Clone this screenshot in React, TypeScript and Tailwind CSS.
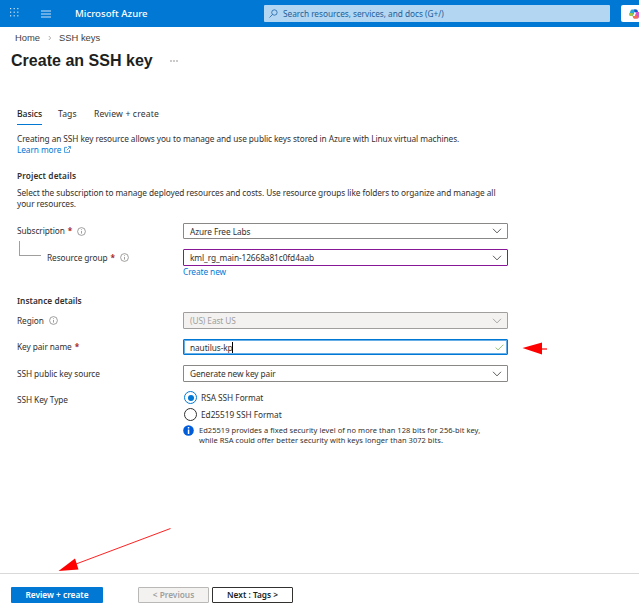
import type { ReactNode } from 'react';

function InfoIcon() {
  return (
    <svg width="9" height="9" viewBox="0 0 9 9" fill="none" stroke="#797775" strokeWidth="0.7">
      <circle cx="4.5" cy="4.5" r="3.9" />
      <path d="M4.5 4v2.6M4.5 2.3v.8" />
    </svg>
  );
}

function ChevronIcon({ color = '#605e5c' }: { color?: string }) {
  return (
    <svg width="10" height="6" viewBox="0 0 10 6" fill="none" stroke={color} strokeWidth="1">
      <path d="M1 .8 5 4.9 9 .8" />
    </svg>
  );
}

function Required() {
  return <span className="ml-[3px] font-bold text-[#a4262c]">*</span>;
}

interface FieldRowProps {
  label: string;
  required?: boolean;
  info?: boolean;
  nested?: boolean;
  className: string;
  children: ReactNode;
}

function FieldRow({ label, required, info, nested, className, children }: FieldRowProps) {
  return (
    <div className={`flex ${className}`}>
      <div className={`flex h-full w-[166px] shrink-0 items-center pb-px ${nested ? 'pl-[30px]' : ''}`}>
        <span>{label}</span>
        {required && <Required />}
        {info && (
          <span className="mt-px ml-[5px]">
            <InfoIcon />
          </span>
        )}
      </div>
      {children}
    </div>
  );
}

const box = 'flex h-full w-[325px] items-center justify-between rounded-[1px] border pl-[6px] pr-[5px]';

export default function App() {
  return (
    <div className="relative flex h-[611px] w-[639px] flex-col overflow-hidden bg-white font-['Noto_Sans',sans-serif] text-[8.3px] leading-[11px] tracking-[-0.08px] whitespace-nowrap text-[#323130]">
      {/* Top bar */}
      <header className="flex h-[27px] shrink-0 items-center bg-[#0078d4] text-white">
        <svg className="mb-[2px] ml-[10px] shrink-0" width="9" height="9" viewBox="0 0 9 9" fill="#d5e9f8">
          {[0, 3.6, 7.2].map((y) =>
            [0, 3.6, 7.2].map((x) => <rect key={`${x}-${y}`} x={x} y={y} width="1.2" height="1.2" />),
          )}
        </svg>
        <svg className="ml-[22px] shrink-0" width="10" height="8" viewBox="0 0 10 8" fill="#cce4f6">
          <path d="M0 .5h10v1H0zM0 3.5h10v1H0zM0 6.5h10v1H0z" />
        </svg>
        <span className="ml-[24px] w-[189px] shrink-0 text-[9.6px] font-medium tracking-[0.03px]">Microsoft Azure</span>
        <div className="flex h-[17px] w-[346px] shrink-0 items-center rounded-[1px] bg-[#b3d6f2] pl-[5px] text-[#1f5f99]">
          <svg width="9" height="9" viewBox="0 0 9 9" fill="none" stroke="#1f66a8" strokeWidth="0.8">
            <circle cx="5.4" cy="3.5" r="2.7" />
            <path d="M3.5 5.5.5 8.5" />
          </svg>
          <span className="ml-[5px] tracking-[-0.04px]">Search resources, services, and docs (G+/)</span>
        </div>
        <div className="ml-[11px] flex h-[17px] w-[30px] shrink-0 items-center rounded-[2px] bg-white pl-[8px]">
          <svg width="12" height="10" viewBox="0 0 12 10">
            <path d="M3 .5h4l-1.8 4.2L3.6 7H1.8C.5 7 0 6 .5 4.6L1.5 1.8Q2 .5 3 .5z" fill="#2ba7d8" />
            <path d="M.5 4 2 4l2 .2L3.6 7H1.8C.5 7 0 6 .5 4z" fill="#a5c93a" />
            <path d="M5 .5h2.3q1 0 1.3 1.1L9 3H7L6 4z" fill="#1d4fc4" />
            <path d="M9 3h1q1.4.2 1 2l-1 3q-.4 1.5-1.8 1.5H4.8L6.4 5.5 7.2 3z" fill="#cf57cf" />
            <path d="M3.6 7h2.3l.8-1.6 2.6 2.8q-.5 1.3-1.4 1.3H5q-1 0-1.4-2.5z" fill="#f4704c" />
            <path d="m5.2 3.3 1.3.1-.8 3-1.2-.1z" fill="#fff" />
          </svg>
        </div>
      </header>

      <nav className="flex h-[22px] shrink-0 items-center pb-px pl-[15px] font-['Liberation_Sans',Arial,sans-serif] text-[9.4px] tracking-normal text-[#424140]">
        <span>Home</span>
        <svg className="ml-[8px]" width="4" height="6" viewBox="0 0 4 6" fill="none" stroke="#8a8886" strokeWidth="0.7">
          <path d="m.8 1 1.9 2L.8 5" />
        </svg>
        <span className="ml-[7px]">SSH keys</span>
      </nav>

      <div className="flex h-[24px] shrink-0 items-center pl-[11px]">
        <h1 className="w-[159px] font-['Liberation_Sans',Arial,sans-serif] text-[16px] leading-[20px] font-bold tracking-[0.02px] text-[#201f1e]">
          Create an SSH key
        </h1>
        <svg width="8" height="2" viewBox="0 0 8 2" fill="#cccbca">
          <path d="M0 0h2v2H0zM3 0h2v2H3zM6 0h2v2H6z" />
        </svg>
      </div>

      <main className="flex flex-1 flex-col pl-[17px]">
        {/* Tabs */}
        <div className="mt-[36px] flex h-[16px] shrink-0 text-[8.6px] tracking-[0.1px]">
          <span className="mr-[16px] w-[25px] border-b border-[#0078d4] font-medium tracking-[-0.05px] text-[#201f1e]">
            Basics
          </span>
          <span className="mr-[16px] w-[20px]">Tags</span>
          <span className="tracking-[0.16px]">Review + create</span>
        </div>

        <p className="mt-[8px]">
          Creating an SSH key resource allows you to manage and use public keys stored in Azure with Linux virtual machines.
        </p>
        <a className="flex h-[11px] items-center text-[#0078d4]">
          Learn more
          <svg className="ml-[3px]" width="7" height="7" viewBox="0 0 7 7" fill="none" stroke="#2b8ad9" strokeWidth="0.8">
            <path d="M3 1.4H.5v5h5V4M4.2.5h2.3v2.3M6.4.6 2.8 4.2" />
          </svg>
        </a>

        <h2 className="mt-[15px] font-semibold tracking-[0.1px]">Project details</h2>
        <p className="mt-[6px]">
          Select the subscription to manage deployed resources and costs. Use resource groups like folders to organize and manage all
          <br />
          your resources.
        </p>

        <FieldRow label="Subscription" required info className="mt-[14px] h-[16px]">
          <div className={`${box} border-[#8a8886]`}>
            Azure Free Labs
            <ChevronIcon />
          </div>
        </FieldRow>
        <div className="relative">
          <span className="absolute top-[2px] left-[2px] h-[15px] w-[22px] border-b border-l border-[#a19f9d]" />
          <FieldRow label="Resource group" required info nested className="mt-[10px] h-[17px]">
            <div className={`${box} border-[#881798]`}>
              kml_rg_main-12668a81c0fd4aab
              <ChevronIcon />
            </div>
          </FieldRow>
        </div>
        <a className="pl-[166px] text-[#0078d4]">Create new</a>

        <h2 className="mt-[18px] font-semibold tracking-[0.03px]">Instance details</h2>
        <FieldRow label="Region" info className="mt-[6px] h-[17px]">
          <div className={`${box} border-[#a19f9d] bg-[#f3f2f1] text-[#a19f9d]`}>
            (US) East US
            <ChevronIcon color="#a8a6a4" />
          </div>
        </FieldRow>
        <FieldRow label="Key pair name" required className="mt-[10px] h-[16px]">
          <div className={`${box} border-[#0078d4] ring-1 ring-[#0078d4]/60 ring-inset`}>
            <span className="flex items-center">
              nautilus-kp
              <span className="-ml-px h-[11px] w-px bg-black" />
            </span>
            <svg className="-mr-[2px]" width="9" height="7" viewBox="0 0 9 7" fill="none" stroke="#7cb95c" strokeWidth="0.8">
              <path d="M.6 3.5 3 5.9 8.3.7" />
            </svg>
          </div>
        </FieldRow>
        <FieldRow label="SSH public key source" className="mt-[10px] h-[17px]">
          <div className={`${box} border-[#8a8886]`}>
            Generate new key pair
            <ChevronIcon />
          </div>
        </FieldRow>

        <FieldRow label="SSH Key Type" className="mt-[9px] h-[17px]">
          <div className="flex flex-col tracking-[-0.03px]">
            <div className="flex h-[14px] items-center gap-[4px] pl-[1px]">
              <span className="flex size-[13px] items-center justify-center rounded-full border border-[#0078d4]">
                <span className="size-[6px] rounded-full bg-[#0078d4]" />
              </span>
              RSA SSH Format
            </div>
            <div className="mt-[4px] flex h-[14px] items-center gap-[4px] pl-[1px]">
              <span className="size-[13px] rounded-full border border-[#323130]" />
              Ed25519 SSH Format
            </div>
            <div className="mt-[4px] flex text-[7.5px] leading-[10px] tracking-[0.04px]">
              <svg className="mr-[5px]" width="11" height="11" viewBox="0 0 11 11">
                <circle cx="5.5" cy="5.5" r="5.3" fill="#015cda" />
                <path d="M4.8 2h1.5v1.5H4.8zM4.8 4.5h1.5V9H4.8z" fill="#fff" />
              </svg>
              <p>
                Ed25519 provides a fixed security level of no more than 128 bits for 256-bit key,
                <br />
                while RSA could offer better security with keys longer than 3072 bits.
              </p>
            </div>
          </div>
        </FieldRow>
      </main>

      <footer className="flex h-[38px] shrink-0 border-t border-[#d9d9d9] pt-[13px] pl-[11px] font-semibold tracking-normal">
        <button className="h-[16px] w-[92px] rounded-[1px] bg-[#0078d4] pb-px text-white">Review + create</button>
        <button className="ml-[35px] h-[16px] w-[71px] rounded-[1px] border border-[#bab8b7] bg-[#f3f2f1] pb-px text-[#a19f9d]">
          &lt; Previous
        </button>
        <button className="ml-[3px] h-[16px] w-[81px] rounded-[1px] border border-[#323130] pb-px text-[#201f1e]">
          Next : Tags &gt;
        </button>
      </footer>

      {/* Red pointer arrows drawn over the page */}
      <svg className="absolute top-[342px] left-[522px]" width="25" height="14" viewBox="0 0 25 14">
        <path d="M19 7h6" stroke="#f66" strokeWidth="2" />
        <path d="M.5 6 20 .5v12z" fill="#f00" />
      </svg>
      <svg className="absolute top-[527px] left-[58px]" width="114" height="46" viewBox="0 0 114 46">
        <path d="M18 37 112.5 1.5" stroke="#f22" strokeWidth="1" />
        <path d="M.5 44 17 31.5 20.5 42.5z" fill="#f00" />
      </svg>
    </div>
  );
}
